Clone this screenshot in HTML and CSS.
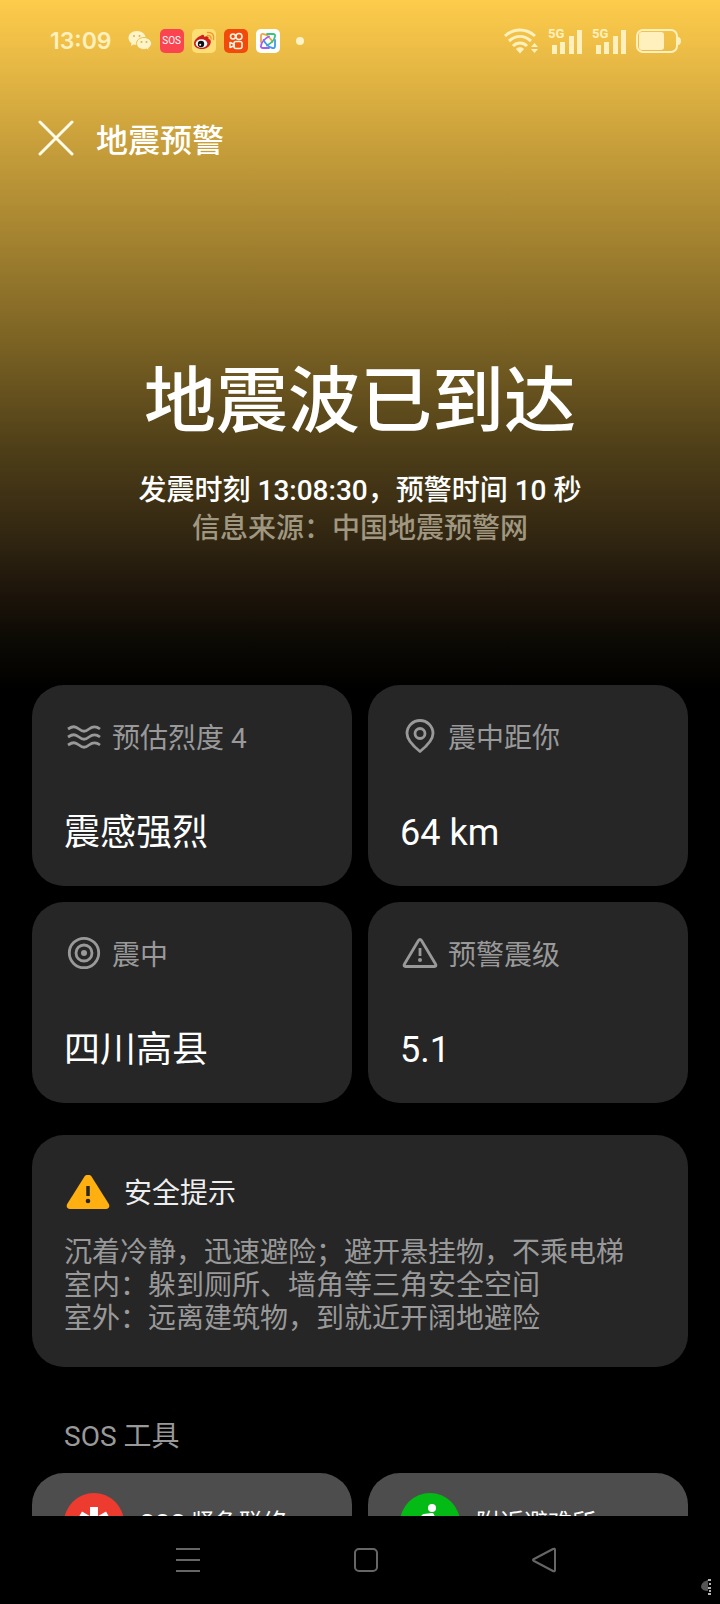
FILE: index.html
```html
<!DOCTYPE html>
<html lang="zh-CN">
<head>
    <meta charset="UTF-8">
    <meta name="viewport" content="width=device-width, initial-scale=1.0">
    <title>地震预警</title>
    <link rel="stylesheet" href="styles.css">
</head>
<body>

    <div class="screen">
        <!-- Status Bar -->
        <div class="status-bar">
            <span class="clock">13:09</span>
            <div class="app-icons">
                <svg width="24" height="22" viewBox="0 0 24 22">
                    <path fill="#fff3c8" d="M9 1C4 1 0.500 4.200 0.500 8c0 2.200 1.200 4 3 5.300L2.800 16l3-1.500c1 .3 2 .5 3.200.5 5 0 8.500-3.200 8.500-7S14 1 9 1z"/>
                    <path fill="#fff3c8" stroke="#eabf49" d="M16 7.500c-4.200 0-7.500 2.600-7.500 6s3.300 6 7.500 6c1 0 1.900-.1 2.700-.4l2.500 1.400-.6-2.400c1.800-1.100 2.900-2.700 2.900-4.600 0-3.400-3.300-6-7.500-6z"/>
                    <g fill="#dcb34a"><circle cx="6" cy="6" r="1"/><circle cx="11.500" cy="6" r="1"/><circle cx="13.500" cy="12" r="1"/><circle cx="18.500" cy="12" r="1"/></g>
                </svg>
                <span class="app-icon sos">SOS</span>
                <svg width="24" height="24" viewBox="0 0 24 24">
                    <rect width="24" height="24" rx="5" fill="#ffdf75"/>
                    <path fill="#d0201c" d="M9 6.500c2-1.300 3.500-.5 3 1.300 3-1.300 5.300-.4 4.500 2 2.300.7 2.800 2.500 2 4.600C17.500 17.500 14 20 9.500 20 5.500 20 2 17.800 2 14.500 2 11.500 5 8 9 6.500z"/>
                    <ellipse cx="9.500" cy="14.500" rx="5.800" ry="4.300" fill="#fff"/>
                    <circle cx="9" cy="15" r="3.200" fill="#111"/>
                    <circle cx="8.200" cy="15.800" r="1" fill="#fff"/>
                    <path d="M15.500 6.500c2.500-.4 4 1.200 3.500 3.600M15.500 3.500c4.500-.7 7 2.500 6 7" fill="none" stroke="#ef9c32" stroke-width="1.500" stroke-linecap="round"/>
                </svg>
                <svg width="24" height="24" viewBox="0 0 24 24">
                    <rect width="24" height="24" rx="5" fill="#f14a0b"/>
                    <g fill="none" stroke="#fff3e4" stroke-width="1.600"><circle cx="9" cy="7.500" r="2.500"/><circle cx="15" cy="7.500" r="3"/><rect x="10" y="12.500" width="8" height="7" rx="2"/><path d="M10 15.300L6 13.500v5l4-1.800z" stroke-linejoin="round"/></g>
                </svg>
                <svg width="24" height="24" viewBox="0 0 24 24">
                    <rect width="24" height="24" rx="5" fill="#fff"/>
                    <g fill="none" stroke-width="1.800" stroke-linecap="round">
                        <path d="M5 13V7c0-1.500 1-2.500 2.500-2 3 .5 7 4 9 8" stroke="#f4a343"/>
                        <path d="M11 5h6c1.500 0 2.500 1 2 2.500-.5 3-4 7-8 9" stroke="#39c47d"/>
                        <path d="M19 11v6c0 1.500-1 2.500-2.500 2-3-.5-7-4-9-8" stroke="#3d9af0"/>
                        <path d="M13 19H7c-1.500 0-2.500-1-2-2.500.5-3 4-7 8-9" stroke="#a45cf0"/>
                    </g>
                </svg>
                <span class="dot"></span>
            </div>
            <div class="signals">
                <svg width="34" height="26" viewBox="0 0 34 26">
                    <g fill="none" stroke="#fff0bd" stroke-width="3"><path d="M1 8c9-8 21-8 30 0"/><path d="M5 13c7-6 15-6 22 0"/><path d="M9 18c4-4 10-4 14 0"/></g>
                    <path d="M12 21c2-2.300 6-2.300 8 0L16 25.500zM27 19l3.500-4 3.500 4zM27 21l3.500 4 3.500-4z" fill="#fff0bd"/>
                </svg>
                <div class="signal">
                    <span>5G</span>
                    <svg width="34" height="26" viewBox="0 0 34 26"><path d="M4 17h5v9H4zM12 14h5v12h-5zM21 8h5v18h-5zM29 2h5v24h-5z" fill="#fff0bd"/></svg>
                </div>
                <div class="signal">
                    <span>5G</span>
                    <svg width="34" height="26" viewBox="0 0 34 26"><path d="M4 17h5v9H4zM12 14h5v12h-5zM21 8h5v18h-5zM29 2h5v24h-5z" fill="#fff0bd"/></svg>
                </div>
                <svg width="46" height="24" viewBox="0 0 46 24">
                    <rect x="1" y="1" width="40" height="22" rx="6" fill="none" stroke="#fff0bd" stroke-width="2"/>
                    <rect x="3" y="3" width="25" height="18" rx="3" fill="#fff0bd"/>
                    <path d="M42 8c4 0 4 8 0 8z" fill="#fff0bd"/>
                </svg>
            </div>
        </div>

        <!-- Title Bar -->
        <header class="title-bar">
            <button type="button" class="close-btn" aria-label="关闭">
                <svg width="36" height="36" viewBox="0 0 36 36"><path d="M2 2l32 32M34 2L2 34" stroke="#fffbe8" stroke-width="3" stroke-linecap="round"/></svg>
            </button>
            <h1>地震预警</h1>
        </header>

        <!-- Alert -->
        <section class="alert">
            <h2>地震波已到达</h2>
            <p>发震时刻 13:08:30，预警时间 10 秒</p>
            <p class="source">信息来源：中国地震预警网</p>
        </section>

        <main class="content">
            <div class="grid">
                <div class="card">
                    <div class="label">
                        <svg width="36" height="36" viewBox="0 0 36 36"><g fill="none" stroke="#999" stroke-width="2.800"><path d="M2 11c5-3 7-3 11 0s6 3 10 0 7-3 11 0"/><path d="M2 19c5-3 7-3 11 0s6 3 10 0 7-3 11 0"/><path d="M2 27c5-3 7-3 11 0s6 3 10 0 7-3 11 0"/></g></svg>
                        <span>预估烈度 4</span>
                    </div>
                    <div class="value">震感强烈</div>
                </div>
                <div class="card">
                    <div class="label">
                        <svg width="36" height="36" viewBox="0 0 36 36"><g fill="none" stroke="#999" stroke-width="2.800"><path d="M18 33.500c-5-4-13-11-13-18a13 13 0 0 1 26 0c0 7-8 14-13 18z" stroke-linejoin="round"/><circle cx="18" cy="15.500" r="5"/></g></svg>
                        <span>震中距你</span>
                    </div>
                    <div class="value">64 km</div>
                </div>
                <div class="card">
                    <div class="label">
                        <svg width="36" height="36" viewBox="0 0 36 36"><g fill="none" stroke="#999" stroke-width="2.800"><circle cx="18" cy="18" r="14.700"/><circle cx="18" cy="18" r="8"/></g><circle cx="18" cy="18" r="3" fill="#999"/></svg>
                        <span>震中</span>
                    </div>
                    <div class="value">四川高县</div>
                </div>
                <div class="card">
                    <div class="label">
                        <svg width="36" height="36" viewBox="0 0 36 36"><path d="M16.500 5.500L2.500 29c-1 1.700-.3 2.500 1 2.500h29c1.300 0 2-.8 1-2.500l-14-23.500c-1-1.500-2-1.500-3 0z" fill="none" stroke="#999" stroke-width="2.800"/><path d="M18 13v8" stroke="#999" stroke-width="2.800"/><circle cx="18" cy="25" r="2" fill="#999"/></svg>
                        <span>预警震级</span>
                    </div>
                    <div class="value">5.1</div>
                </div>
            </div>

            <!-- Safety Tips -->
            <section class="card tips">
                <h3>
                    <svg width="44" height="36" viewBox="0 0 44 36"><path d="M18.500 1.500c2-2.500 5-2.500 7 0l17 27c1.800 3 .5 5.500-2.500 5.500H4c-3 0-4.300-2.500-2.500-5.500z" fill="#ffb010"/><path d="M22 11v10" stroke="#262626" stroke-width="3.500"/><circle cx="22" cy="26" r="2.300" fill="#262626"/></svg>
                    <span>安全提示</span>
                </h3>
                <p>沉着冷静，迅速避险；避开悬挂物，不乘电梯</p>
                <p>室内：躲到厕所、墙角等三角安全空间</p>
                <p>室外：远离建筑物，到就近开阔地避险</p>
            </section>

            <h3 class="tools-title">SOS 工具</h3>
            <div class="grid tools">
                <button type="button" class="tool">
                    <svg width="60" height="60" viewBox="0 0 60 60"><circle cx="30" cy="30" r="30" fill="#ed3b2f"/><path d="M30 14v32M16 22l28 16M44 22L16 38" stroke="#fff" stroke-width="8"/></svg>
                    <span>SOS 紧急联络</span>
                </button>
                <button type="button" class="tool">
                    <svg width="60" height="60" viewBox="0 0 60 60"><circle cx="30" cy="30" r="30" fill="#03bb14"/><circle cx="32" cy="15" r="4" fill="#fff"/><path d="M20 27l4-4 8-1 4 9 7 3M31 22l-5 13 8 6v9M26 35l-4 7-8 1" fill="none" stroke="#fff" stroke-width="4" stroke-linecap="round" stroke-linejoin="round"/></svg>
                    <span>附近避难所</span>
                </button>
            </div>
        </main>

        <!-- Navigation -->
        <nav class="nav-bar">
            <button type="button" aria-label="菜单"><svg width="26" height="26" viewBox="0 0 26 26"><path d="M1 2h24M1 13h24M1 24h24" stroke="#666" stroke-width="2"/></svg></button>
            <button type="button" aria-label="主页"><svg width="26" height="26" viewBox="0 0 26 26"><rect x="2" y="2" width="22" height="22" rx="4" fill="none" stroke="#666" stroke-width="2"/></svg></button>
            <button type="button" aria-label="返回"><svg width="26" height="26" viewBox="0 0 26 26"><path d="M22 2L3 12q-2 1 0 2l19 10q2 1 2-1V3q0-2-2-1z" fill="none" stroke="#666" stroke-width="2"/></svg></button>
            <svg class="corner-mark" width="12" height="18" viewBox="0 0 12 18"><path d="M8 2Q1 4 1 9q1 4 7 4z" fill="#555"/><path d="M8 2h3M9 6h2M8 10h3M9 13h2M8 16h3" stroke="#eee" stroke-width="1.500"/></svg>
        </nav>
    </div>

</body>
</html>
```

FILE: styles.css
```css
* {
    box-sizing: border-box;
    font-family: Roboto, "Noto Sans CJK SC", sans-serif;
}

body {
    background: #000;
    color: #fff;
    margin: 0;
}

h1, h2, h3, p {
    margin: 0;
    font-weight: 400;
}

button {
    background: none;
    border: none;
    padding: 0;
    color: inherit;
    cursor: pointer;
}

svg {
    display: block;
    flex-shrink: 0;
}

.screen {
    display: flex;
    flex-direction: column;
    height: 100vh;
    background: linear-gradient(#fdcc4c 0, #f0c047 40px, #c9a03b 140px, #a38230 240px, #786023 350px, #4e3e18 450px, #302511 540px, #1e150b 590px, #0c0a04 640px, #000 690px);
}

.status-bar {
    display: flex;
    align-items: center;
    height: 82px;
    padding: 0 38px 0 50px;
    color: #fff0bd;
}

.clock {
    font-family: Inter, sans-serif;
    font-size: 23px;
    font-weight: 600;
    margin-right: 16px;
}

.app-icons {
    display: flex;
    align-items: center;
    gap: 8px;
}

.app-icon {
    width: 24px;
    height: 24px;
    border-radius: 5px;
}

.sos {
    background: #fa4550;
    color: #fff;
    font-size: 10px;
    line-height: 24px;
    text-align: center;
}

.dot {
    width: 8px;
    height: 8px;
    margin-left: 8px;
    border-radius: 50%;
    background: #fff3c8;
}

.signals {
    display: flex;
    align-items: center;
    gap: 10px;
    margin-left: auto;
}

.signal {
    position: relative;
}

.signal span {
    position: absolute;
    top: -1px;
    left: 0;
    font-size: 13px;
    font-weight: 700;
    line-height: 14px;
}

.title-bar {
    display: flex;
    align-items: center;
    gap: 22px;
    height: 112px;
    padding: 0 38px;
}

.title-bar h1 {
    font-size: 32px;
    font-weight: 500;
}

.alert {
    height: 491px;
    padding-top: 160px;
    text-align: center;
    font-size: 28px;
    font-weight: 500;
}

.alert h2 {
    font-size: 72px;
    font-weight: 500;
    line-height: 96px;
    margin-bottom: 22px;
}

.alert p {
    font-weight: 500;
    line-height: 38px;
}

.alert .source {
    color: #a09780;
}

.content {
    flex: 1;
    min-height: 0;
    padding: 0 32px;
    overflow: hidden;
}

.grid {
    display: grid;
    grid-template-columns: 1fr 1fr;
    gap: 16px;
}

.card {
    background: #262626;
    border-radius: 32px;
    padding: 32px;
}

.label {
    display: flex;
    align-items: center;
    gap: 10px;
    height: 38px;
    padding-left: 2px;
    color: #999;
    font-size: 28px;
}

.value {
    margin-top: 54px;
    margin-bottom: -3px;
    font-size: 36px;
    line-height: 48px;
}

.tips {
    margin-top: 32px;
    color: #999;
    font-size: 28px;
    line-height: 33px;
}

.tips h3 {
    display: flex;
    align-items: center;
    gap: 14px;
    margin-bottom: 18px;
    padding-left: 2px;
    color: #eee;
    font-size: 28px;
    line-height: 48px;
}

.tips h3 span {
    padding-top: 3px;
}

.tools-title {
    padding: 50px 32px 16px;
    color: #999;
    font-size: 28px;
    line-height: 40px;
}

.tool {
    display: flex;
    align-items: center;
    gap: 16px;
    height: 100px;
    padding: 0 32px;
    border-radius: 32px;
    background: #4d4d4d;
    font-size: 24px;
}

.tool span {
    padding-bottom: 6px;
}

.nav-bar {
    position: relative;
    display: flex;
    justify-content: center;
    align-items: center;
    gap: 152px;
    height: 88px;
    padding-left: 12px;
    background: #000;
}

.corner-mark {
    position: absolute;
    right: 8px;
    bottom: 8px;
}
```
